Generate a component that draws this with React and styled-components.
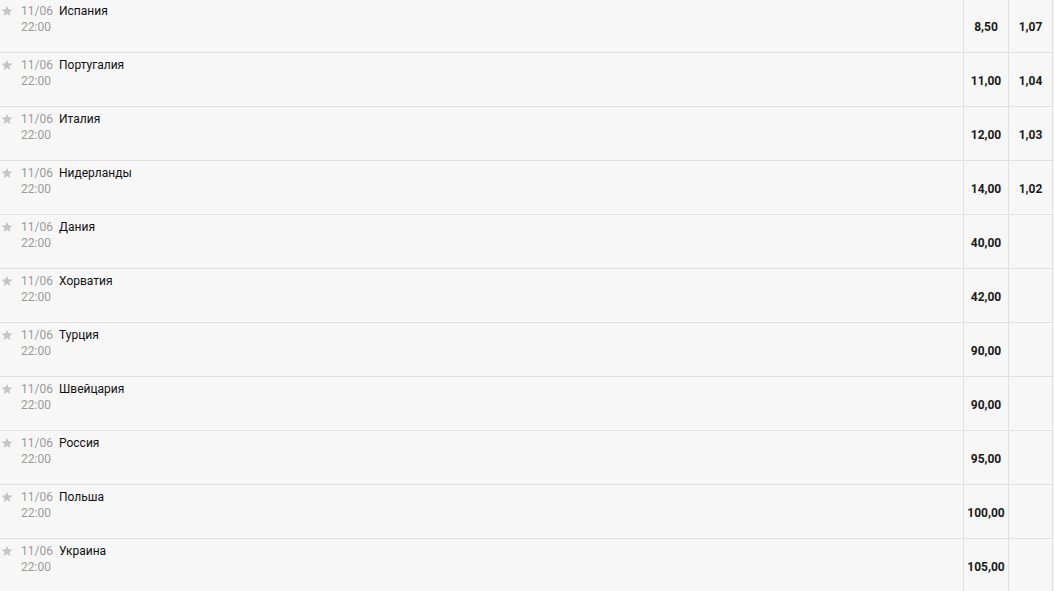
import React from "react";
import styled, { createGlobalStyle } from "styled-components";

const Global = createGlobalStyle`
  html, body { margin: 0; padding: 0; background: #f7f7f7; }
  body { font-family: Roboto, "Liberation Sans", Arial, sans-serif; overflow: hidden; }
`;

const List = styled.div`
  margin-top: -1px;
  margin-right: 1px;
`;

const Row = styled.div`
  display: flex;
  height: 53px;
  border-bottom: 1px solid #e1e1e1;
`;

const Info = styled.div`
  flex: 1;
  display: flex;
  padding-top: 4px;
  font-size: 12px;
  line-height: 16px;
`;

const StarBox = styled.div`
  width: 21px;
  padding-top: 2px;
  padding-left: 1px;
  box-sizing: border-box;
`;

const DateCol = styled.div`
  color: #9a9a9a;
  display: flex;
  flex-direction: column;
  width: 38px;
`;

const Name = styled.div`
  color: #111;
`;

const Odd = styled.div`
  width: ${(p) => p.$w}px;
  border-left: 1px solid #e1e1e1;
  border-right: ${(p) => (p.$last ? "1px solid #e1e1e1" : "none")};
  display: flex;
  align-items: center;
  justify-content: center;
  padding-top: 2px;
  box-sizing: content-box;
  font-size: 12px;
  font-weight: 700;
  color: #1a1a1a;
`;

const Star = () => (
  <svg width="12" height="12" viewBox="0 0 24 24">
    <path
      d="M12 1.5l3.1 7.1 7.7.7-5.8 5.1 1.7 7.6L12 18l-6.7 4 1.7-7.6L1.2 9.3l7.7-.7z"
      fill="#c6c6c6"
    />
  </svg>
);

const data = [
  ["Испания", "8,50", "1,07"],
  ["Португалия", "11,00", "1,04"],
  ["Италия", "12,00", "1,03"],
  ["Нидерланды", "14,00", "1,02"],
  ["Дания", "40,00", ""],
  ["Хорватия", "42,00", ""],
  ["Турция", "90,00", ""],
  ["Швейцария", "90,00", ""],
  ["Россия", "95,00", ""],
  ["Польша", "100,00", ""],
  ["Украина", "105,00", ""],
];

export default function App() {
  return (
    <>
      <Global />
      <List>
        {data.map(([name, a, b]) => (
          <Row key={name}>
            <Info>
              <StarBox>
                <Star />
              </StarBox>
              <DateCol>
                <span>11/06</span>
                <span>22:00</span>
              </DateCol>
              <Name>{name}</Name>
            </Info>
            <Odd $w={44}>{a}</Odd>
            <Odd $w={43} $last>
              {b}
            </Odd>
          </Row>
        ))}
      </List>
    </>
  );
}
